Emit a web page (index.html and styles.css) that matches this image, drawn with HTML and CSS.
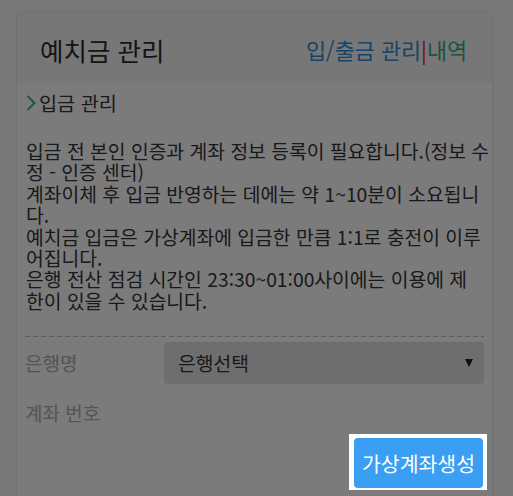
FILE: index.html
```html
<!DOCTYPE html>
<html lang="ko">
<head>
<meta charset="utf-8">
<title>예치금 관리</title>
<link rel="stylesheet" href="styles.css">
</head>
<body>
<div class="panel">
  <div class="panel-head">
    <h2 class="panel-title">예치금 관리</h2>
    <div class="head-links"><a class="link-blue" href="#">입/출금 관리</a><span class="sep">|</span><a class="link-green" href="#">내역</a></div>
  </div>
  <div class="panel-body">
    <div class="section-title"><svg class="chev" width="10" height="18" viewBox="0 0 10 18"><polyline points="1.5,2 8.5,9 1.5,16" fill="none" stroke="#3cae82" stroke-width="2"/></svg><span>입금 관리</span></div>
    <p class="notice">입금 전 본인 인증과 계좌 정보 등록이 필요합니다.(정보 수<br>정 - 인증 센터)<br>계좌이체 후 입금 반영하는 데에는 약 1~10분이 소요됩니<br>다.<br>예치금 입금은 가상계좌에 입금한 만큼 1:1로 충전이 이루<br>어집니다.<br>은행 전산 점검 시간인 23:30~01:00사이에는 이용에 제<br>한이 있을 수 있습니다.</p>
    <div class="dash"></div>
    <div class="form-row">
      <span class="label">은행명</span>
      <div class="select"><span>은행선택</span><span class="arrow"></span></div>
    </div>
    <div class="form-row2">
      <span class="label">계좌 번호</span>
    </div>
    <div class="btn-row">
      <div class="spot"><button class="btn-create">가상계좌생성</button></div>
    </div>
  </div>
</div>
<div class="overlay"></div>
</body>
</html>
```
FILE: styles.css
```css
html, body {
  margin: 0;
  padding: 0;
}
body {
  background: #f0f0f0;
  font-family: "Noto Sans CJK KR", "Noto Sans", sans-serif;
  color: #444;
  overflow: hidden;
}
.panel {
  margin: 12px 20px 0 16px;
  width: 475px;
  border: 1px solid #e0e0e0;
  border-radius: 4px;
  background: #f6f6f6;
  height: 600px;
}
.panel-head {
  height: 70px;
  background: #eeeeee;
  display: flex;
  align-items: center;
  justify-content: space-between;
  padding: 4px 25px 0 23px;
  box-sizing: border-box;
  border-radius: 4px 4px 0 0;
}
.panel-title {
  margin: 0;
  font-size: 25.5px;
  font-weight: normal;
  color: #2a2a2a;
  line-height: 32px;
}
.head-links {
  font-size: 21.8px;
  line-height: 30px;
}
.head-links a {
  text-decoration: none;
}
.link-blue { color: #3486d0; }
.link-green { color: #34a878; }
.sep { color: #e02020; }
.panel-body {
  padding: 8px 8px 0 8px;
}
.section-title {
  display: flex;
  align-items: center;
  font-size: 19.7px;
  line-height: 24px;
  color: #333;
}
.chev {
  display: block;
  margin: 0 3px 0 1px;
}
.notice {
  margin: 26px 0 0 1px;
  font-size: 19.3px;
  line-height: 21.4px;
  color: #333;
  white-space: nowrap;
}
.dash {
  margin-top: 24px;
  height: 1px;
  background: repeating-linear-gradient(90deg, #b8b8b8 0 5px, transparent 5px 8px);
}
.form-row {
  margin-top: 5px;
  display: flex;
  align-items: center;
}
.label {
  font-size: 19px;
  color: #a8a8a8;
  line-height: 24px;
}
.form-row .label {
  width: 139px;
}
.select {
  flex: 1;
  height: 42px;
  background: #dcdcdc;
  border-radius: 4px;
  display: flex;
  align-items: center;
  justify-content: space-between;
  padding: 0 11px 0 14px;
  font-size: 19.3px;
  color: #333;
}
.arrow {
  width: 0;
  height: 0;
  border-left: 4.5px solid transparent;
  border-right: 4.5px solid transparent;
  border-top: 8px solid #222;
}
.form-row2 {
  margin-top: 17px;
}
.btn-row {
  display: flex;
  justify-content: flex-end;
  margin-top: 8px;
  margin-right: -3px;
}
.spot {
  position: relative;
  z-index: 20;
  background: #fff;
  padding: 4px 4px 2px 5px;
}
.btn-create {
  display: block;
  width: 129px;
  height: 50px;
  border: none;
  border-radius: 4px;
  background: #3a9ef2;
  color: #fff;
  font-family: "Noto Sans CJK KR", "Noto Sans", sans-serif;
  font-size: 20.5px;
  padding: 0;
}
.overlay {
  position: fixed;
  inset: 0;
  background: rgba(0, 0, 0, 0.5);
  z-index: 10;
}
```
